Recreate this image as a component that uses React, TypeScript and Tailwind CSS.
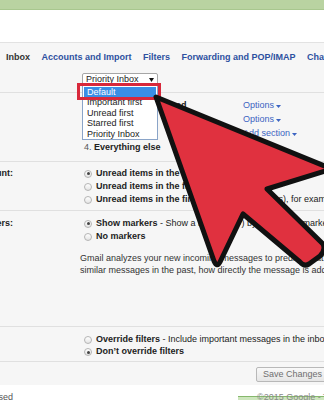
import React from "react";

function Caret({ className = "" }: { className?: string }) {
  return (
    <svg width="5" height="3" viewBox="0 0 5 3" className={className}>
      <path d="M0 0h5L2.5 3z" fill="currentColor" />
    </svg>
  );
}

function Radio({ checked = false }: { checked?: boolean }) {
  return (
    <span className="ml-[2px] mr-[4px] flex h-[8px] w-[8px] shrink-0 items-center justify-center rounded-full border border-[#b5b5b5] bg-gradient-to-b from-white to-[#e4e4e4]">
      {checked && <span className="h-[3px] w-[3px] rounded-full bg-[#444]" />}
    </span>
  );
}

// label column: text is right-aligned at x=12 and runs off the left edge
function Label({ text }: { text?: string }) {
  return (
    <div className="w-[82px] shrink-0">
      {text && (
        <div className="flex h-[13px] w-[13px] items-center justify-end">
          <span className="whitespace-nowrap font-bold">{text}</span>
        </div>
      )}
    </div>
  );
}

function OptionsLink({ text = "Options" }: { text?: string }) {
  return (
    <span className="flex items-center gap-[2px] whitespace-nowrap text-[#3c64c2]">
      {text}
      <Caret />
    </span>
  );
}

export default function App() {
  const sections = [
    { n: "1.", name: "Important and unread", link: "Options" },
    { n: "2.", name: "Starred", link: "Options" },
    { n: "3.", name: "", link: "Add section" },
    { n: "4.", name: "Everything else", link: "Options" },
  ];

  return (
    <div className="relative h-[400px] w-[324px] overflow-hidden bg-white font-['Liberation_Sans',Arial,sans-serif] text-[9px] text-[#222]">
      {/* top bar */}
      <div className="h-[10px] border-b border-[#a8c78e] bg-[#b9d3a1]" />
      <div className="h-[32px]" />

      <div className="border-t border-[#e2e2e2] bg-[#f6f6f6]">
        {/* TABS */}
        <div className="flex h-[27px] items-center gap-[11.5px] whitespace-nowrap pl-[6px] pt-[2px] font-bold">
          <span className="shrink-0 text-[#333]">Inbox</span>
          <span className="shrink-0 text-[#2d50a0]">Accounts and Import</span>
          <span className="shrink-0 text-[#2d50a0]">Filters</span>
          <span className="shrink-0 text-[#2d50a0]">Forwarding and POP/IMAP</span>
          <span className="shrink-0 text-[#2d50a0]">Chat</span>
          <span className="shrink-0 text-[#2d50a0]">Web Clips</span>
        </div>

        {/* INBOX TYPE */}
        <div className="flex h-[23px] border-b border-[#e0e0e0] pt-[3px]">
          <Label />
          <div className="flex h-[14px] w-[76px] items-center justify-between rounded-[2px] border border-[#a6a6a6] bg-white pl-[3px] pr-[3px]">
            <span className="whitespace-nowrap">Priority Inbox</span>
            <svg width="5" height="4" viewBox="0 0 5 4">
              <path d="M0 0h5L2.5 4z" fill="#111" />
            </svg>
          </div>
        </div>

        {/* INBOX SECTIONS */}
        <div className="flex h-[69px] border-b border-[#e0e0e0] pt-[6px]">
          <Label />
          <div className="flex flex-col">
            {sections.map((s) => (
              <div key={s.n} className="flex h-[14px] items-center">
                <div className="w-[161px] whitespace-nowrap pl-[2px]">
                  <span className="text-[#555]">{s.n}</span>{" "}
                  <span className="font-bold">{s.name}</span>
                </div>
                <OptionsLink text={s.link} />
              </div>
            ))}
          </div>
        </div>

        {/* UNREAD COUNT */}
        <div className="flex h-[49px] border-b border-[#e0e0e0] pt-[5px]">
          <Label text="Unread count:" />
          <div className="flex flex-col whitespace-nowrap">
            <div className="flex h-[13px] items-center">
              <Radio checked />
              <span className="font-bold">Unread items in the Inbox</span>
            </div>
            <div className="flex h-[13px] items-center">
              <Radio />
              <span className="font-bold">Unread items in the first section</span>
            </div>
            <div className="flex h-[13px] items-center">
              <Radio />
              <span className="font-bold">Unread items in the first section</span>
              <span>&nbsp;(all sections), for example 12</span>
            </div>
          </div>
        </div>

        {/* IMPORTANCE MARKERS */}
        <div className="flex h-[116px] border-b border-[#e0e0e0] pt-[6px]">
          <Label text="Importance markers:" />
          <div className="flex flex-col whitespace-nowrap">
            <div className="flex h-[13px] items-center">
              <Radio checked />
              <span className="font-bold">Show markers</span>
              <span>&nbsp;- Show a marker (</span>
              <svg width="8" height="6" viewBox="0 0 8 6" className="mx-[1px]">
                <path d="M0 0h5.5L8 3 5.5 6H0l2.5-3z" fill="#f2c230" />
              </svg>
              <span>) by messages marked as important.</span>
            </div>
            <div className="flex h-[13px] items-center">
              <Radio />
              <span className="font-bold">No markers</span>
            </div>
            <div className="-ml-[2px] mt-[9px] leading-[12px] text-[#333]">
              <p>Gmail analyzes your new incoming messages to predict what's important, considering things like how you've treated</p>
              <p>similar messages in the past, how directly the message is addressed to you, and many other factors.</p>
            </div>
          </div>
        </div>

        {/* FILTERED MAIL */}
        <div className="flex h-[35px] border-b border-[#e0e0e0] pt-[7px]">
          <Label />
          <div className="flex flex-col whitespace-nowrap">
            <div className="flex h-[12px] items-center">
              <Radio />
              <span className="font-bold">Override filters</span>
              <span>&nbsp;- Include important messages in the inbox even if they are filtered.</span>
            </div>
            <div className="flex h-[12px] items-center">
              <Radio checked />
              <span className="font-bold">Don’t override filters</span>
            </div>
          </div>
        </div>

        {/* SAVE */}
        <div className="flex h-[23px] gap-[6px] whitespace-nowrap pl-[256px] pt-[5px]">
          <div className="flex h-[15px] shrink-0 items-center rounded-[2px] border border-[#b8b8b8] bg-gradient-to-b from-[#f8f8f8] to-[#e6e6e6] px-[6px] pt-[1px] text-[#6f6f6f]">
            Save Changes
          </div>
          <div className="flex h-[15px] shrink-0 items-center rounded-[2px] border border-[#b8b8b8] bg-[#f1f1f1] px-[6px] pt-[1px] text-[#6f6f6f]">
            Cancel
          </div>
        </div>
      </div>

      {/* FOOTER */}
      <div className="flex h-[15px] items-start">
        <div className="mt-[8px] flex h-[10px] w-[13px] shrink-0 items-center justify-end">
          <span className="whitespace-nowrap text-[#555]">0.01 GB (0%) of 15 GB used</span>
        </div>
        <div className="ml-auto mt-[11px] h-[6px] w-[86px] border-t border-[#86b86c] bg-[#cde6bd]">
          <div className="-mt-[4px] whitespace-nowrap pl-[19px] leading-[9px] text-[#8a8a8a]">
            ©2015 Google - Terms - Privacy
          </div>
        </div>
      </div>

      {/* DROPDOWN MENU */}
      <div className="absolute left-[82px] top-[83px] h-[57px] w-[76px] border border-[#8aa4c8] bg-white pt-[2.5px] leading-[10.5px]">
        <div className="mx-[1px] bg-[#3a8ee6] pl-[3px] text-white">Default</div>
        <div className="pl-[4px]">Important first</div>
        <div className="pl-[4px]">Unread first</div>
        <div className="pl-[4px]">Starred first</div>
        <div className="pl-[4px]">Priority Inbox</div>
      </div>

      {/* highlight box */}
      <div className="absolute left-[77px] top-[83px] h-[17px] w-[84px] border-[3px] border-[#d8283b]" />

      {/* big arrow */}
      <svg className="pointer-events-none absolute left-0 top-0" width="324" height="400" viewBox="0 0 324 400">
        <path
          d="M156 97 L332 169 L267 189 L323 244 Q326 250 320 256 L309 264 Q304 267 300 262 L243 214 L220 262 Q217 268 214 261 Z"
          fill="#e0313f"
          stroke="#111"
          strokeWidth="5"
          strokeLinejoin="round"
        />
      </svg>
    </div>
  );
}
